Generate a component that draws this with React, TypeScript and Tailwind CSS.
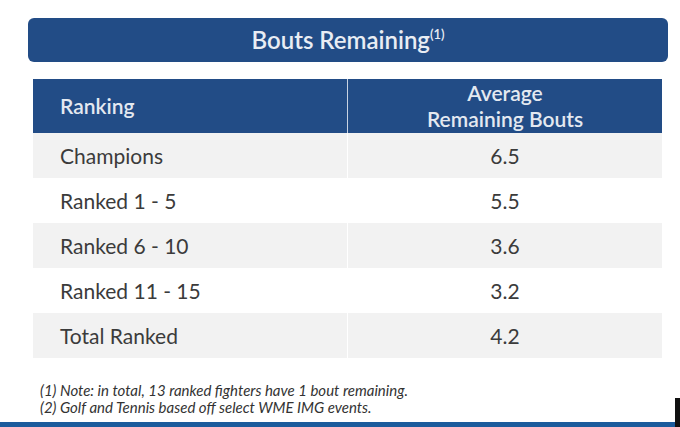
const rows = [
  { label: 'Champions', value: '6.5' },
  { label: 'Ranked 1 - 5', value: '5.5' },
  { label: 'Ranked 6 - 10', value: '3.6' },
  { label: 'Ranked 11 - 15', value: '3.2' },
  { label: 'Total Ranked', value: '4.2' },
];

export default function App() {
  return (
    <div className="relative flex h-[427px] w-[680px] flex-col overflow-hidden bg-white font-['Lato',sans-serif]">
      <div className="ml-[28px] mt-[18px] flex h-[44px] w-[640px] items-center justify-center rounded-[6px] bg-[#224c86] text-[24px] font-semibold text-[#e9edf4]">
        Bouts Remaining<sup className="text-[13px]">(1)</sup>
      </div>

      <div className="ml-[33px] mt-[17px] w-[629px]">
        <div className="flex h-[54px] bg-[#224c86] text-[21px] font-semibold text-[#e4e9f1]">
          <div className="flex w-[314px] items-center pl-[27px]">Ranking</div>
          <div className="w-px bg-[#c9d3e2]" />
          <div className="flex flex-1 flex-col items-center justify-center leading-[26px]">
            <span>Average</span>
            <span>Remaining Bouts</span>
          </div>
        </div>
        {rows.map((row, i) => (
          <div
            key={row.label}
            className={`flex h-[45px] text-[21px] text-[#3b3b3b] ${i % 2 === 0 ? 'bg-[#f2f2f2]' : 'bg-white'}`}
          >
            <div className="flex w-[314px] items-center pl-[27px]">{row.label}</div>
            <div className="w-px bg-white" />
            <div className="flex flex-1 items-center justify-center">{row.value}</div>
          </div>
        ))}
      </div>

      <div className="ml-[40px] mt-[24px] text-[15px] italic leading-[17px] text-[#333]">
        <p>(1) Note: in total, 13 ranked fighters have 1 bout remaining.</p>
        <p>(2) Golf and Tennis based off select WME IMG events.</p>
      </div>

      <div className="absolute bottom-0 left-0 h-[5px] w-full bg-[#1b5b9c]" />
      <div className="absolute bottom-0 right-0 h-[29px] w-[5px] bg-[#111]" />
    </div>
  );
}
